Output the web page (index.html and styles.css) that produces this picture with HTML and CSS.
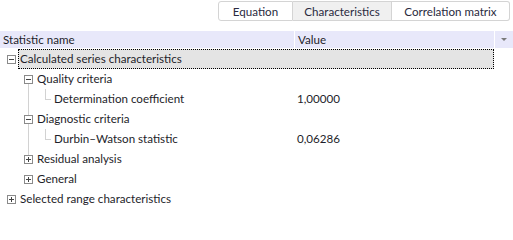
FILE: index.html
```html
<!DOCTYPE html>
<html lang="en">
<head>
   <title>Statistics</title>
   <link rel="stylesheet" href="styles.css">
</head>
<body>

   <!-- Tabs -->
   <div class="tabs">
      <button class="tab">Equation</button>
      <button class="tab active">Characteristics</button>
      <button class="tab">Correlation matrix</button>
   </div>

   <!-- Tree grid -->
   <div class="grid">
      <div class="head">
         <div class="head-name">Statistic name</div>
         <div class="head-value">Value</div>
         <div class="head-menu"><span class="arrow"></span></div>
      </div>

      <div class="rows">
         <div class="row">
            <span class="node"><span class="toggle minus"></span></span>
            <div class="body focused">
               <div class="name">Calculated series characteristics</div>
               <div class="value"></div>
            </div>
         </div>

         <div class="row">
            <span class="indent"></span>
            <span class="node line-below"><span class="toggle minus"></span></span>
            <div class="body">
               <div class="name">Quality criteria</div>
               <div class="value"></div>
            </div>
         </div>

         <div class="row">
            <span class="indent"></span>
            <span class="indent line"></span>
            <span class="node leaf"></span>
            <div class="body">
               <div class="name">Determination coefficient</div>
               <div class="value">1,00000</div>
            </div>
         </div>

         <div class="row">
            <span class="indent"></span>
            <span class="node line-full"><span class="toggle minus"></span></span>
            <div class="body">
               <div class="name">Diagnostic criteria</div>
               <div class="value"></div>
            </div>
         </div>

         <div class="row">
            <span class="indent"></span>
            <span class="indent line"></span>
            <span class="node leaf"></span>
            <div class="body">
               <div class="name">Durbin&ndash;Watson statistic</div>
               <div class="value">0,06286</div>
            </div>
         </div>

         <div class="row">
            <span class="indent"></span>
            <span class="node line-above"><span class="toggle plus"></span></span>
            <div class="body">
               <div class="name">Residual analysis</div>
               <div class="value"></div>
            </div>
         </div>

         <div class="row">
            <span class="indent"></span>
            <span class="node"><span class="toggle plus"></span></span>
            <div class="body">
               <div class="name">General</div>
               <div class="value"></div>
            </div>
         </div>

         <div class="row">
            <span class="node"><span class="toggle plus"></span></span>
            <div class="body">
               <div class="name">Selected range characteristics</div>
               <div class="value"></div>
            </div>
         </div>
      </div>
   </div>

</body>
</html>
```

FILE: styles.css
```css
* {
   margin: 0;
   padding: 0;
   box-sizing: border-box;
}

body {
   background: #fff;
   font-family: 'Lato', 'Noto Sans', sans-serif;
   font-size: 11.6px;
   color: #1e1e2a;
   width: 513px;
   height: 240px;
   overflow: hidden;
}

/* Tabs at the top right */
.tabs {
   display: flex;
   justify-content: flex-end;
   padding: 1px 3px 0 0;
   height: 31px;
}

.tab {
   height: 20px;
   font: inherit;
   color: #2a2a40;
   background: #fff;
   border: 1px solid #d4d4d4;
   border-left: none;
   cursor: pointer;
}

.tab:first-child {
   border-left: 1px solid #d4d4d4;
   border-radius: 3px 0 0 3px;
}

.tab:last-child {
   border-radius: 0 3px 3px 0;
}

.tab:nth-child(1) { width: 75px; }
.tab:nth-child(2) { width: 99px; }
.tab:nth-child(3) { width: 118px; }

.tab.active {
   background: #f0f0f0;
}

/* Grid header */
.head {
   display: flex;
   height: 17px;
   background: #e8e8fa;
   line-height: 17px;
}

.head-name {
   width: 295px;
   padding-left: 3px;
   border-right: 1px solid #fff;
}

.head-value {
   width: 200px;
   padding-left: 3px;
   border-right: 1px solid #fff;
}

.head-menu {
   flex: 1;
   display: flex;
   align-items: center;
   justify-content: center;
}

.arrow {
   width: 0;
   height: 0;
   border-left: 3px solid transparent;
   border-right: 3px solid transparent;
   border-top: 3px solid #7a7a7a;
}

/* Tree rows */
.rows {
   padding-top: 1px;
}

.row {
   display: flex;
   height: 20px;
}

.indent {
   width: 17px;
   flex: none;
}

.indent.line {
   background: linear-gradient(#d2d2d2, #d2d2d2) 11px 0 / 1px 100% no-repeat;
}

.node {
   width: 18px;
   flex: none;
   display: flex;
   align-items: center;
   padding-left: 7px;
}

.node.line-below {
   background: linear-gradient(#d2d2d2, #d2d2d2) 11px 15px / 1px 6px no-repeat;
}

.node.line-full {
   background:
      linear-gradient(#d2d2d2, #d2d2d2) 11px 0 / 1px 6px no-repeat,
      linear-gradient(#d2d2d2, #d2d2d2) 11px 15px / 1px 6px no-repeat;
}

.node.line-above {
   background: linear-gradient(#d2d2d2, #d2d2d2) 11px 0 / 1px 6px no-repeat;
}

.node.leaf {
   background:
      linear-gradient(#d2d2d2, #d2d2d2) 11px 0 / 1px 10px no-repeat,
      linear-gradient(#d2d2d2, #d2d2d2) 11px 10px / 6px 1px no-repeat;
}

/* Expand / collapse box */
.toggle {
   width: 9px;
   height: 9px;
   border: 1px solid #8a8a8a;
   background:
      linear-gradient(#444, #444) center / 5px 1px no-repeat;
   margin-top: 1px;
}

.toggle.plus {
   background:
      linear-gradient(#444, #444) center / 5px 1px no-repeat,
      linear-gradient(#444, #444) center / 1px 5px no-repeat;
}

.body {
   flex: 1;
   display: flex;
   margin-right: 19px;
   line-height: 18px;
   border: 1px solid transparent;
}

.body.focused {
   background: #e4e4e4;
   border: 1px dotted #000;
}

.name {
   flex: 1;
   padding-left: 1px;
   white-space: nowrap;
}

.value {
   width: 199px;
   padding-left: 3px;
}
```
